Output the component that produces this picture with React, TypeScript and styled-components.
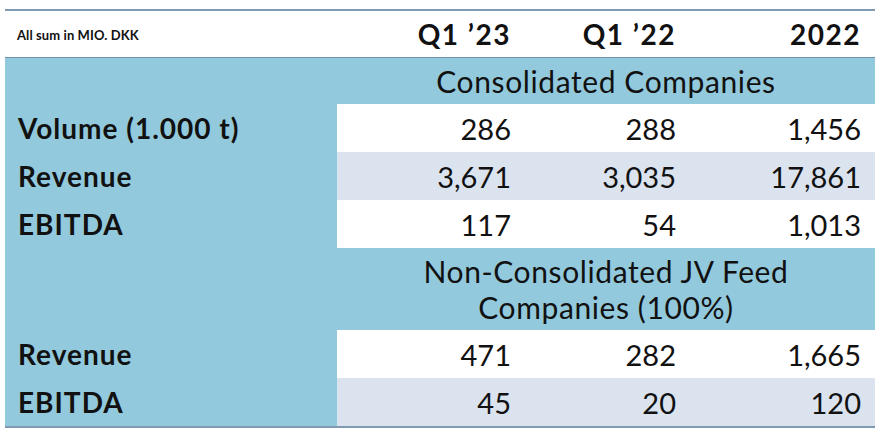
import React from 'react';
import styled, { createGlobalStyle } from 'styled-components';

type Row = {
  label: string;
  values: string[];
  striped?: boolean;
};

type Section = {
  title: React.ReactNode;
  rows: Row[];
};

const columns = ['Q1 \u201923', 'Q1 \u201922', '2022'];

const sections: Section[] = [
  {
    title: 'Consolidated Companies',
    rows: [
      { label: 'Volume (1.000 t)', values: ['286', '288', '1,456'] },
      { label: 'Revenue', values: ['3,671', '3,035', '17,861'], striped: true },
      { label: 'EBITDA', values: ['117', '54', '1,013'] },
    ],
  },
  {
    title: (
      <>
        Non-Consolidated JV Feed
        <br />
        Companies (100%)
      </>
    ),
    rows: [
      { label: 'Revenue', values: ['471', '282', '1,665'] },
      { label: 'EBITDA', values: ['45', '20', '120'], striped: true },
    ],
  },
];

export default function App() {
  return (
    <>
      <GlobalStyle />
      <Page>
        <Table>
          <Caption>All sum in MIO. DKK</Caption>
          {columns.map((col) => (
            <ColHead key={col}>{col}</ColHead>
          ))}
          {sections.map((section, i) => (
            <React.Fragment key={i}>
              <SectionRow $first={i === 0}>
                <SectionTitle>{section.title}</SectionTitle>
              </SectionRow>
              {section.rows.map((row) => (
                <React.Fragment key={row.label}>
                  <Label>{row.label}</Label>
                  {row.values.map((v, j) => (
                    <Value key={j} $striped={row.striped}>
                      {v}
                    </Value>
                  ))}
                </React.Fragment>
              ))}
            </React.Fragment>
          ))}
        </Table>
      </Page>
    </>
  );
}

const GlobalStyle = createGlobalStyle`
  html, body {
    margin: 0;
    padding: 0;
    background: #ffffff;
  }
  body {
    font-family: Lato, 'Open Sans', sans-serif;
    color: #111111;
  }
`;

const Page = styled.div`
  width: 880px;
  height: 432px;
  padding: 9px 5px 0;
  box-sizing: border-box;
`;

const Table = styled.div`
  display: grid;
  grid-template-columns: 332px 188px 165px 185px;
  border-top: 2px solid #7f9bb4;
  border-bottom: 2px solid #7f9bb4;
  background: #93c9dc;
`;

const Caption = styled.div`
  background: #ffffff;
  height: 46px;
  display: flex;
  align-items: center;
  padding-left: 12px;
  padding-top: 2px;
  box-sizing: border-box;
  font-size: 13px;
  font-weight: 700;
  letter-spacing: 0.1px;
`;

const ColHead = styled.div`
  background: #ffffff;
  height: 46px;
  display: flex;
  align-items: center;
  justify-content: flex-end;
  padding-right: 14px;
  font-size: 28px;
  font-weight: 700;
  letter-spacing: 1.5px;
`;

const SectionRow = styled.div<{ $first?: boolean }>`
  grid-column: 1 / -1;
  display: grid;
  grid-template-columns: 332px 1fr;
  border-top: ${(p) => (p.$first ? '1px solid #6f93ab' : 'none')};
  padding: 5px 0;
`;

const SectionTitle = styled.div`
  grid-column: 2;
  text-align: center;
  font-size: 30px;
  line-height: 36px;
  font-weight: 400;
  letter-spacing: 0.6px;
`;

const Label = styled.div`
  height: 48px;
  display: flex;
  align-items: center;
  padding-left: 13px;
  font-size: 28px;
  font-weight: 700;
  letter-spacing: 1px;
`;

const Value = styled.div<{ $striped?: boolean }>`
  height: 48px;
  display: flex;
  align-items: center;
  justify-content: flex-end;
  padding-right: 14px;
  background: ${(p) => (p.$striped ? '#dbe3ef' : '#ffffff')};
  font-size: 29px;
  font-weight: 400;
`;
